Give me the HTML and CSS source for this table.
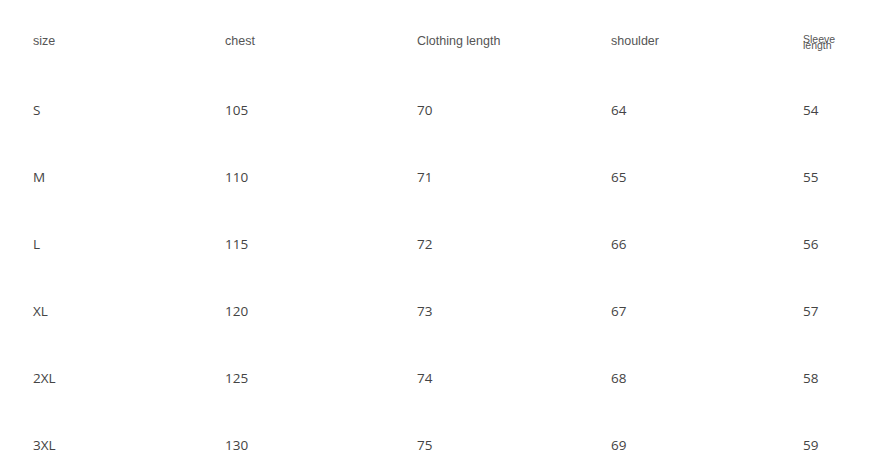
FILE: index.html
```html
<!DOCTYPE html>
<html>
<head>
<meta charset="utf-8">
<link rel="stylesheet" href="styles.css">
</head>
<body>
<div class="table">
  <div class="cell head">size</div>
  <div class="cell head">chest</div>
  <div class="cell head">Clothing length</div>
  <div class="cell head">shoulder</div>
  <div class="cell head small"><span>Sleeve</span><span>length</span></div>

  <div class="cell">S</div><div class="cell">105</div><div class="cell">70</div><div class="cell">64</div><div class="cell">54</div>
  <div class="cell">M</div><div class="cell">110</div><div class="cell">71</div><div class="cell">65</div><div class="cell">55</div>
  <div class="cell">L</div><div class="cell">115</div><div class="cell">72</div><div class="cell">66</div><div class="cell">56</div>
  <div class="cell">XL</div><div class="cell">120</div><div class="cell">73</div><div class="cell">67</div><div class="cell">57</div>
  <div class="cell">2XL</div><div class="cell">125</div><div class="cell">74</div><div class="cell">68</div><div class="cell">58</div>
  <div class="cell">3XL</div><div class="cell">130</div><div class="cell">75</div><div class="cell">69</div><div class="cell">59</div>
</div>
</body>
</html>
```
FILE: styles.css
```css
html, body {
  margin: 0;
  padding: 0;
  background: #ffffff;
}
.table {
  display: grid;
  grid-template-columns: 192px 192px 194px 192px 60px;
  grid-template-rows: 70px repeat(6, 67px);
  padding: 6px 0 0 33px;
  font-family: "Open Sans", "DejaVu Sans", sans-serif;
  font-size: 13.5px;
  color: #444444;
}
.cell {
  display: flex;
  align-items: center;
  padding-top: 1px;
}
.head {
  font-family: "Liberation Sans", Arial, sans-serif;
  font-size: 12.5px;
  color: #555555;
  padding-top: 0;
}
.small {
  flex-direction: column;
  align-items: flex-start;
  justify-content: center;
  font-size: 10.5px;
  line-height: 6px;
  padding-top: 2px;
}
```
